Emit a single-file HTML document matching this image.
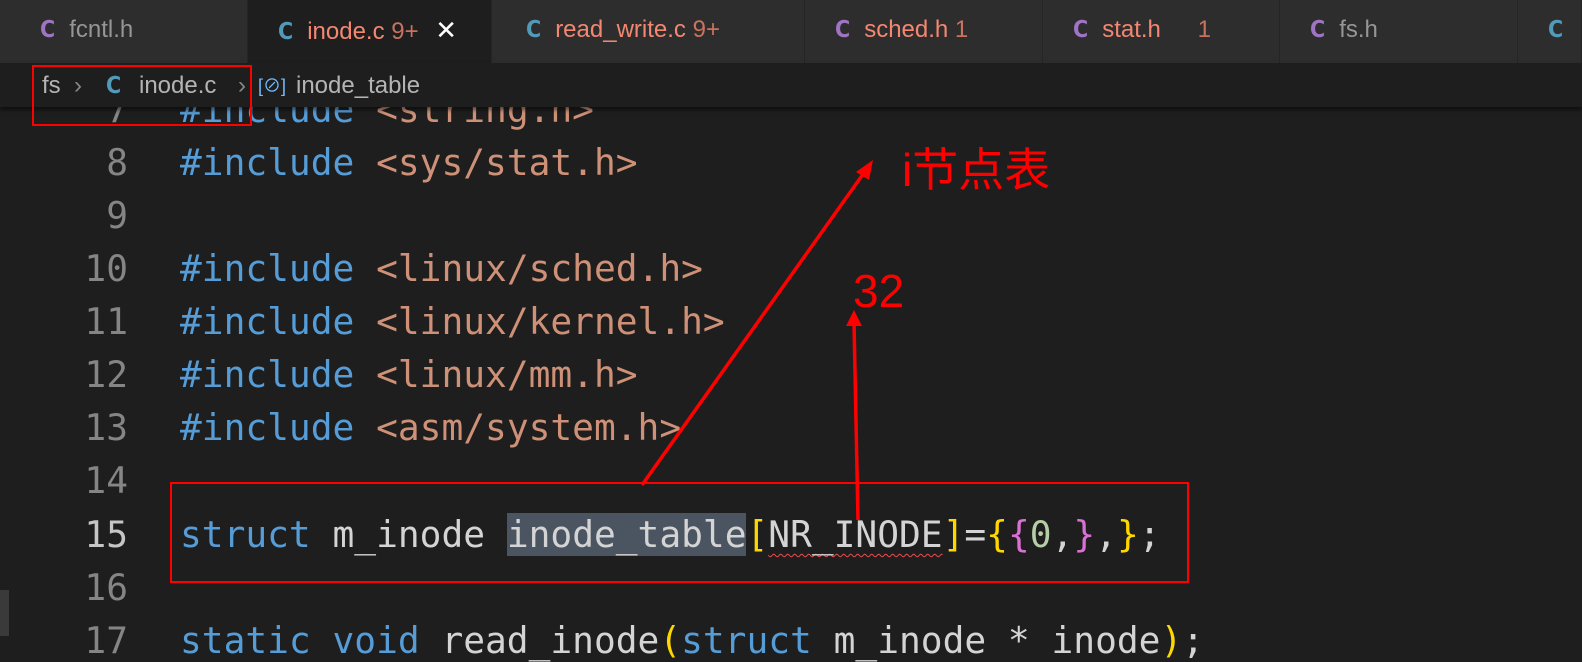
<!DOCTYPE html>
<html><head><style>
body{margin:0;width:1582px;height:636px;overflow:hidden;background:#1e1e1e;position:relative;font-family:"Liberation Sans","Noto Sans CJK SC",sans-serif}
.tabs{position:absolute;top:0;left:0;width:1582px;height:63px;background:#252526}
.tab{position:absolute;top:0;height:63px;background:#2d2d2d;border-right:1px solid #252526;font-size:24px;line-height:60px;box-sizing:border-box;padding-left:38px;color:#969696;white-space:nowrap}
.tab b{font-weight:bold;margin-right:14px;font-family:"DejaVu Sans Condensed","DejaVu Sans",sans-serif;font-size:23px}
.p{color:#a074c4}.c{color:#519aba}.r{color:#f48771}.n{color:#c9725f}
.bc{position:absolute;top:63px;left:0;width:1582px;height:44px;background:#1e1e1e;box-shadow:0 3px 4px #0008;font-size:24px;line-height:46px;color:#b4b4b4;z-index:2;white-space:nowrap}
.code{position:absolute;left:0;top:10px;font-family:"DejaVu Sans Mono",monospace;font-size:36.2px;white-space:pre}
.ln{position:absolute;width:128px;text-align:right;color:#858585}
.cl{position:absolute;left:180px;color:#d4d4d4}
.k{color:#569cd6}.s{color:#ce9178}
</style></head><body>
<div class="tabs">
<div class="tab" style="left:0;width:248px;padding-left:40px"><b class="p">C</b>fcntl.h</div>
<div class="tab" style="left:248px;width:244px;background:#1e1e1e;padding-left:30px"><b class="c">C</b><span class="r">inode.c</span> <span class="n">9+</span> <span style="color:#fff;margin-left:10px;font-size:26px">✕</span></div>
<div class="tab" style="left:492px;width:313px;padding-left:34px"><b class="c">C</b><span class="r">read_write.c</span> <span class="n">9+</span></div>
<div class="tab" style="left:805px;width:238px;padding-left:30px"><b class="p">C</b><span class="r">sched.h</span> <span class="n">1</span></div>
<div class="tab" style="left:1043px;width:237px;padding-left:30px"><b class="p">C</b><span class="r">stat.h</span> <span class="n" style="margin-left:30px">1</span></div>
<div class="tab" style="left:1280px;width:238px;padding-left:30px"><b class="p">C</b>fs.h</div>
<div class="tab" style="left:1518px;width:64px;padding-left:30px"><b class="c">C</b></div>
</div>
<div class="bc"><span style="position:absolute;left:42px">fs</span><span style="position:absolute;left:74px;color:#888">›</span><b class="c" style="position:absolute;left:106px;font-family:'DejaVu Sans Condensed','DejaVu Sans';font-size:23px">C</b><span style="position:absolute;left:139px">inode.c</span><span style="position:absolute;left:238px;color:#888">›</span><span style="position:absolute;left:258px;color:#75beff;font-size:18px">[⊘]</span><span style="position:absolute;left:296px">inode_table</span></div>
<div class="code">
<div class="ln" style="top:78px">7</div><div class="cl" style="top:78px"><span class="k">#include</span> <span class="s">&lt;string.h&gt;</span></div>
<div class="ln" style="top:131px">8</div><div class="cl" style="top:131px"><span class="k">#include</span> <span class="s">&lt;sys/stat.h&gt;</span></div>
<div class="ln" style="top:184px">9</div>
<div class="ln" style="top:237px">10</div><div class="cl" style="top:237px"><span class="k">#include</span> <span class="s">&lt;linux/sched.h&gt;</span></div>
<div class="ln" style="top:290px">11</div><div class="cl" style="top:290px"><span class="k">#include</span> <span class="s">&lt;linux/kernel.h&gt;</span></div>
<div class="ln" style="top:343px">12</div><div class="cl" style="top:343px"><span class="k">#include</span> <span class="s">&lt;linux/mm.h&gt;</span></div>
<div class="ln" style="top:396px">13</div><div class="cl" style="top:396px"><span class="k">#include</span> <span class="s">&lt;asm/system.h&gt;</span></div>
<div class="ln" style="top:449px">14</div>
<div class="ln" style="top:503px;color:#c6c6c6">15</div><div class="cl" style="top:503px"><span class="k">struct</span> m_inode <span style="background:#4b5561">inode_table</span><span style="color:#ffd700">[</span><span style="text-decoration:underline wavy #f14c4c;text-decoration-thickness:1px;text-underline-offset:6px">NR_INODE</span><span style="color:#ffd700">]</span>=<span style="color:#ffd700">{</span><span style="color:#da70d6">{</span><span style="color:#b5cea8">0</span>,<span style="color:#da70d6">}</span>,<span style="color:#ffd700">}</span>;</div>
<div class="ln" style="top:556px">16</div>
<div class="ln" style="top:609px">17</div><div class="cl" style="top:609px"><span class="k">static void</span> read_inode<span style="color:#ffd700">(</span><span class="k">struct</span> m_inode * inode<span style="color:#ffd700">)</span>;</div>
</div>
<div style="position:absolute;left:0;top:590px;width:9px;height:46px;background:#3a3a3a"></div>
<div style="position:absolute;left:32px;top:65px;width:220px;height:61px;border:2px solid #f00;box-sizing:border-box;z-index:3"></div>
<div style="position:absolute;left:170px;top:482px;width:1019px;height:101px;border:2px solid #f00;box-sizing:border-box;z-index:3"></div>
<svg style="position:absolute;left:0;top:0;z-index:3" width="1582" height="636">
<line x1="642" y1="485" x2="866" y2="170" stroke="#f00" stroke-width="3.5"/>
<polygon points="873,160 856,172 869,180" fill="#f00"/>
<line x1="858" y1="520" x2="854" y2="322" stroke="#f00" stroke-width="3.5"/>
<polygon points="854,310 846,326 862,326" fill="#f00"/>
</svg>
<div style="position:absolute;left:902px;top:134px;font-size:46px;color:#f00;z-index:3">i节点表</div>
<div style="position:absolute;left:853px;top:264px;font-size:46px;color:#f00;z-index:3">32</div>
</body></html>
